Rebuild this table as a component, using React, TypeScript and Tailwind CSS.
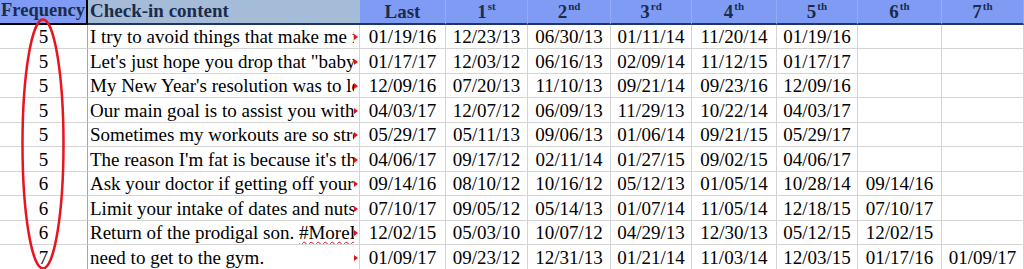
import React from "react";

const rows = [
  { f: 5, text: "I try to avoid things that make me fat like mirrors", dates: ["01/19/16", "12/23/13", "06/30/13", "01/11/14", "11/20/14", "01/19/16", "", ""] },
  { f: 5, text: "Let's just hope you drop that \"baby weight\" soon", dates: ["01/17/17", "12/03/12", "06/16/13", "02/09/14", "11/12/15", "01/17/17", "", ""] },
  { f: 5, text: "My New Year's resolution was to lose weight", dates: ["12/09/16", "07/20/13", "11/10/13", "09/21/14", "09/23/16", "12/09/16", "", ""] },
  { f: 5, text: "Our main goal is to assist you with your goals", dates: ["04/03/17", "12/07/12", "06/09/13", "11/29/13", "10/22/14", "04/03/17", "", ""] },
  { f: 5, text: "Sometimes my workouts are so strenuous", dates: ["05/29/17", "05/11/13", "09/06/13", "01/06/14", "09/21/15", "05/29/17", "", ""] },
  { f: 5, text: "The reason I'm fat is because it's the only way", dates: ["04/06/17", "09/17/12", "02/11/14", "01/27/15", "09/02/15", "04/06/17", "", ""] },
  { f: 6, text: "Ask your doctor if getting off your couch", dates: ["09/14/16", "08/10/12", "10/16/12", "05/12/13", "01/05/14", "10/28/14", "09/14/16", ""] },
  { f: 6, text: "Limit your intake of dates and nuts", dates: ["07/10/17", "09/05/12", "05/14/13", "01/07/14", "11/05/14", "12/18/15", "07/10/17", ""] },
  { f: 6, text: "Return of the prodigal son. ", tag: "#MoreLife", dates: ["12/02/15", "05/03/10", "10/07/12", "04/29/13", "12/30/13", "05/12/15", "12/02/15", ""] },
  { f: 7, text: "need to get to the gym.", dates: ["01/09/17", "09/23/12", "12/31/13", "01/21/14", "11/03/14", "12/03/15", "01/17/16", "01/09/17"] },
];

const heads: [string, string][] = [
  ["Last", ""],
  ["1", "st"],
  ["2", "nd"],
  ["3", "rd"],
  ["4", "th"],
  ["5", "th"],
  ["6", "th"],
  ["7", "th"],
];

function Marker() {
  return (
    <span className="absolute right-[1px] bottom-[8px] h-0 w-0 border-y-[3px] border-l-[4px] border-y-transparent border-l-[#e0101a]" />
  );
}

export default function App() {
  return (
    <div
      className="relative h-[269px] w-[1024px] overflow-hidden bg-white text-[19px] text-black"
      style={{ fontFamily: '"Liberation Serif", "Times New Roman", serif' }}
    >
      <div className="grid grid-cols-[88px_272px_86px_82px_83px_81px_85px_81px_84px_82px]">
        {/* header */}
        <div className="flex h-[24.5px] items-center justify-center overflow-hidden border-r-2 border-b-2 border-black bg-[#7f9bf3] text-[18.5px] font-bold text-[#1c2b4a]">
          Frequency
        </div>
        <div className="flex h-[24.5px] items-center overflow-hidden border-b-2 border-[#1f3563] bg-[#a5bcd9] pl-[2px] font-bold text-[#1c2b4a]">
          Check-in content
        </div>
        {heads.map(([n, sup], i) => (
          <div
            key={i}
            className="flex h-[24.5px] items-center justify-center border-r border-b-2 border-r-[#95acf2] border-b-[#1f3563] bg-[#7f9bf3] font-bold leading-[20px] text-[#1c2b4a]"
          >
            <span className="mt-[1px]">{n}</span>
            {sup && <span className="relative -top-[5px] ml-[1px] text-[11px] leading-[12px]">{sup}</span>}
          </div>
        ))}

        {/* rows */}
        {rows.map((r, ri) => (
          <React.Fragment key={ri}>
            <div className="flex h-[24.5px] items-end justify-center border-r border-b border-r-[#a8a8a8] border-b-[#d4d4d4] leading-[22px]">
              {r.f}
            </div>
            <div className="relative flex h-[24.5px] items-end overflow-hidden border-r border-b border-[#d4d4d4] pr-[5px] pl-[2px] leading-[22px]">
              <span className="block overflow-hidden whitespace-nowrap">
                {r.text}
                {r.tag && <span className="underline decoration-[#e0101a] decoration-wavy decoration-1 underline-offset-2">{r.tag}</span>}
              </span>
              <Marker />
            </div>
            {r.dates.map((d, di) => (
              <div
                key={di}
                className="flex h-[24.5px] items-end justify-center border-r border-b border-[#d4d4d4] leading-[22px]"
              >
                {d}
              </div>
            ))}
          </React.Fragment>
        ))}
      </div>

      {/* red ellipse annotation */}
      <svg className="pointer-events-none absolute top-[18px] left-[20px]" width="46" height="252" viewBox="0 0 46 252">
        <ellipse cx="23" cy="126" rx="20.5" ry="124.5" fill="none" stroke="#e8141e" strokeWidth="2.5" />
      </svg>
    </div>
  );
}
